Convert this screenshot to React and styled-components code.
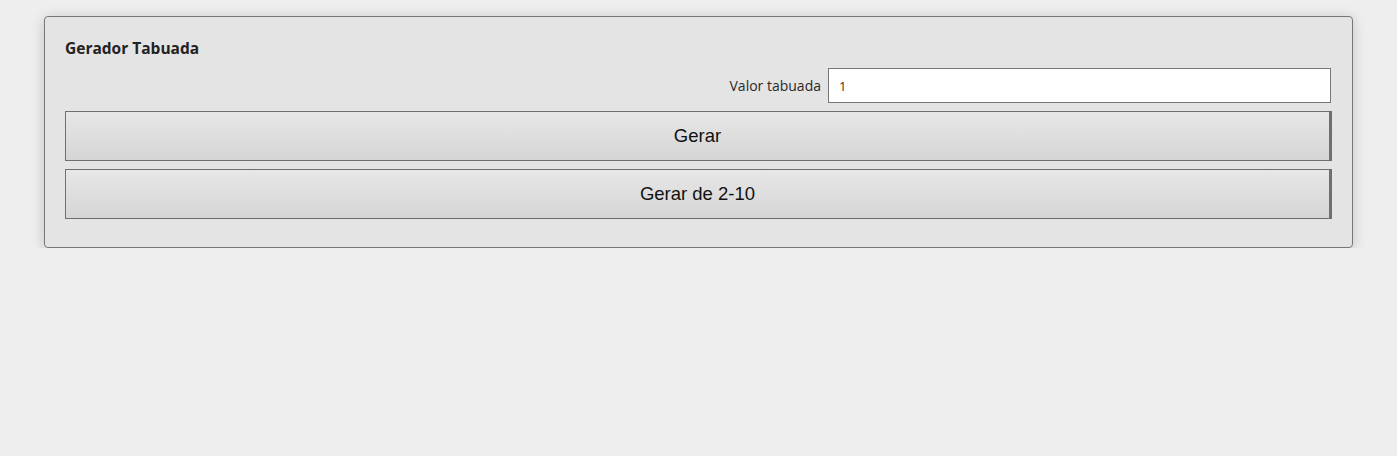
import React from "react";
import styled, { createGlobalStyle } from "styled-components";

const Global = createGlobalStyle`
  html, body { margin: 0; padding: 0; background: #eeeeee; }
  body { font-family: "Open Sans", "Noto Sans", sans-serif; }
`;

const Page = styled.div`
  padding: 16px 44px 0 44px;
`;

const Panel = styled.div`
  background: #e4e4e4;
  border: 1px solid #777;
  border-radius: 4px;
  box-shadow: 0 2px 14px rgba(0, 0, 0, 0.18);
  padding: 21px 20px 28px 20px;
  display: flex;
  flex-direction: column;
`;

const Title = styled.h3`
  margin: 0;
  font-family: "Open Sans", "Noto Sans", sans-serif;
  font-size: 15.5px;
  line-height: 20px;
  font-weight: 700;
  color: #222;
`;

const FieldRow = styled.div`
  display: flex;
  justify-content: flex-end;
  align-items: center;
  gap: 7px;
  margin-top: 10px;
  padding-right: 1px;
`;

const Label = styled.label`
  font-family: "Open Sans", "Noto Sans", sans-serif;
  font-size: 14px;
  color: #2a2a2a;
`;

const Input = styled.input`
  box-sizing: border-box;
  width: 503px;
  height: 35px;
  border: 1px solid #777;
  background: #fff;
  padding: 0 10px;
  font-family: "Open Sans", "Noto Sans", sans-serif;
  font-size: 13px;
  color: #4a2a10;
  outline: none;
`;

const Button = styled.button`
  box-sizing: border-box;
  width: 100%;
  height: 50px;
  margin-top: 8px;
  border: 1px solid #6f6f6f;
  border-right-width: 3px;
  border-radius: 0;
  background: linear-gradient(to bottom, #e7e7e7, #d5d5d5);
  font-family: "Liberation Sans", Arial, sans-serif;
  font-size: 18.5px;
  color: #111;
  cursor: pointer;
`;

export default function App() {
  return (
    <>
      <Global />
      <Page>
        <Panel>
          <Title>Gerador Tabuada</Title>
          <FieldRow>
            <Label htmlFor="valor">Valor tabuada</Label>
            <Input id="valor" defaultValue="1" />
          </FieldRow>
          <Button>Gerar</Button>
          <Button>Gerar de 2-10</Button>
        </Panel>
      </Page>
    </>
  );
}
